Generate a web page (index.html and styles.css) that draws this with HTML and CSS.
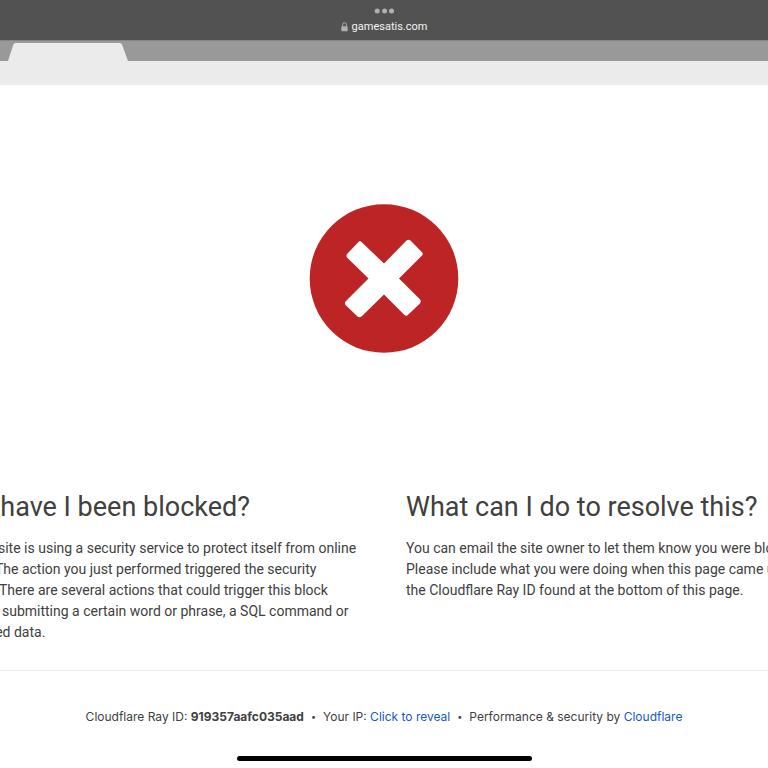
FILE: index.html
```
<!DOCTYPE html>
<html lang="en">
<head>
    <meta charset="UTF-8">
    <meta name="viewport" content="width=device-width, initial-scale=1.0">
    <title>Attention Required! | Cloudflare</title>
    <link rel="stylesheet" href="styles.css">
</head>
<body>
    <header class="topbar">
        <svg class="dots" viewBox="0 0 20 6" aria-hidden="true">
            <circle cx="3.2" cy="3" r="2.5"/>
            <circle cx="10.600" cy="3" r="2.5"/>
            <circle cx="17.500" cy="3" r="2.5"/>
        </svg>
        <div class="address">
            <svg class="lock" viewBox="0 0 7 10" aria-hidden="true">
                <path d="M1.6 4.5V2.7a1.9 1.9 0 0 1 3.8 0v1.8" fill="none" stroke="#b0b0b0"/>
                <rect x="0.3" y="4.2" width="6.4" height="5" rx="0.8" fill="#b0b0b0"/>
            </svg>
            <span>gamesatis.com</span>
        </div>
    </header>

    <main>
        <div class="browser">
            <div class="tabs">
                <svg class="tab" viewBox="0 0 120 19" aria-hidden="true">
                    <path d="M0 19 5.2 3Q5.8 1 7.8 1H111.500Q113.500 1 114.200 3L120 19Z" fill="#ebebeb"/>
                </svg>
            </div>
            <div class="toolbar"></div>
        </div>

        <div class="screenshot">
            <svg class="error-icon" viewBox="0 0 150 150" role="img" aria-label="Blocked">
                <circle cx="75" cy="75.500" r="74.300" fill="#bd2426"/>
                <path d="M52 38.500 75 60.500 97.500 37.500Q99.500 36 101.500 37.500L113.300 49.500Q114.500 51 113 52.500L90 75.500 111.200 96.500Q112.500 98.500 111 100.500L98.500 112.200Q97 113.500 95.500 112L75 91.500 52.500 113.500Q50.500 115 48.500 113.500L36.500 102Q35.500 100 36.500 98.500L59.500 75.500 38 54.500Q37 52.500 38 51L49.500 39Q50.800 37.500 52 38.500Z" fill="#fff"/>
            </svg>
        </div>

        <div class="columns">
            <section class="column">
                <h2>Why have I been blocked?</h2>
                <p>This website is using a security service to protect itself from online<br>
                attacks. The action you just performed triggered the security<br>
                solution. There are several actions that could trigger this block<br>
                including submitting a certain word or phrase, a SQL command or<br>
                malformed data.</p>
            </section>
            <section class="column">
                <h2>What can I do to resolve this?</h2>
                <p>You can email the site owner to let them know you were blocked.<br>
                Please include what you were doing when this page came up and<br>
                the Cloudflare Ray ID found at the bottom of this page.</p>
            </section>
        </div>
    </main>

    <footer class="footer">
        <span>Cloudflare Ray ID: <strong>919357aafc035aad</strong></span>
        <span class="separator">•</span>
        <span>Your IP: <a href="#">Click to reveal</a></span>
        <span class="separator">•</span>
        <span>Performance &amp; security by <a href="#">Cloudflare</a></span>
    </footer>
    <div class="home-indicator"></div>
</body>
</html>
```
FILE: styles.css
```
body {
    margin: 0;
    overflow: hidden;
    background-color: #fff;
    color: #404040;
    font-family: Inter, "Liberation Sans", sans-serif;
    font-size: 14px;
}

a {
    color: #1658c4;
    text-decoration: none;
}

.topbar {
    display: flex;
    flex-direction: column;
    align-items: center;
    gap: 6px;
    height: 32px;
    padding-top: 8px;
    background-color: #525252;
}

.dots {
    width: 20px;
    height: 6px;
    fill: #b0b0b0;
}

.address {
    display: flex;
    align-items: center;
    gap: 4px;
    color: #f2f2f2;
    font-family: Roboto, sans-serif;
    font-size: 11px;
    line-height: 14px;
}

.lock {
    width: 7px;
    height: 10px;
}

.tabs {
    display: flex;
    align-items: flex-end;
    height: 20px;
    padding-left: 8px;
    border-top: 1px solid #858585;
    background-color: #999;
}

.tab {
    width: 120px;
    height: 19px;
}

.toolbar {
    height: 24px;
    background-color: #ebebeb;
}

.screenshot {
    display: flex;
    justify-content: center;
    padding: 118px 0;
}

.error-icon {
    width: 150px;
    height: 150px;
}

/* wider than the window, so both sides run off the edges */
.columns {
    display: flex;
    justify-content: center;
    gap: 44px;
    padding-bottom: 27px;
    border-bottom: 1px solid #ebebeb;
}

.column {
    flex: 0 0 420px;
    min-width: 0;
    white-space: nowrap;
    font-family: Roboto, sans-serif;
}

.column h2 {
    margin: 0;
    padding: 18px 0 13px;
    font-size: 27px;
    font-weight: 400;
    line-height: 36px;
}

.column p {
    margin: 0;
    line-height: 21px;
}

.footer {
    display: flex;
    justify-content: center;
    gap: 7px;
    padding: 37px 0 30px;
    font-size: 12px;
    line-height: 18px;
}

.footer strong {
    font-weight: 700;
}

.separator {
    font-size: 9px;
}

.home-indicator {
    width: 295px;
    height: 5px;
    margin: 0 auto;
    border-radius: 3px;
    background-color: #000;
}
```
